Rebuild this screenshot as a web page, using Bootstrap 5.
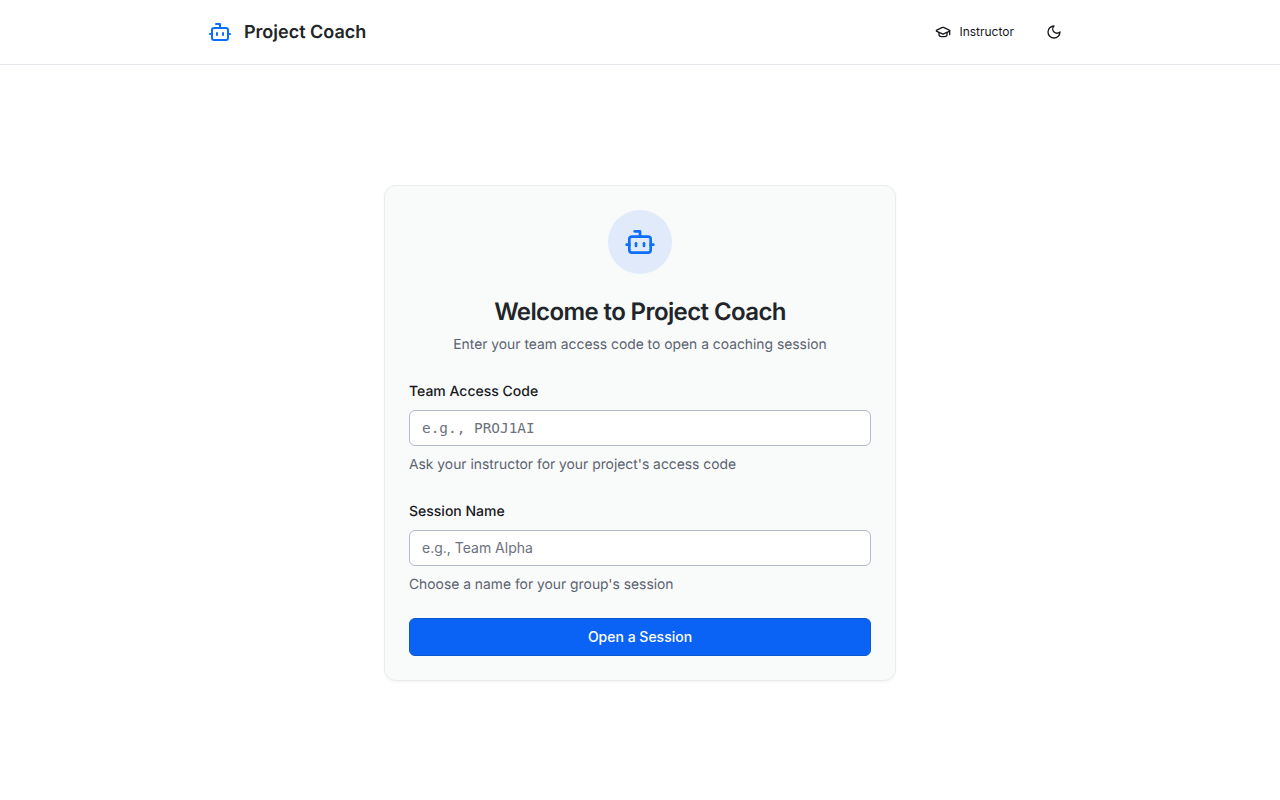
<!DOCTYPE html>
<html lang="en">

<head>
  <meta charset="UTF-8">
  <title>Project Coach</title>
  <link href="https://cdn.jsdelivr.net/npm/bootstrap@5.3.2/dist/css/bootstrap.min.css" rel="stylesheet">
  <style>
    body { font-family: Inter, sans-serif; color: #212529; background: #fff; text-rendering: geometricPrecision; }
    .top-bar { height: 65px; border-bottom: 1px solid #e4e6eb; }
    .top-inner { max-width: 896px; height: 64px; padding: 0 16px; margin: 0 auto; }
    .brand-name { font-size: 18px; font-weight: 600; color: #212529; margin-left: 12px; }
    .instructor-btn { font-size: 12px; font-weight: 400; color: #16181d; padding: 6px 12px; border: 0; background: none; gap: 8px; }
    .moon-btn { width: 36px; height: 36px; border: 0; background: none; color: #16181d; padding: 0; margin-left: 10px; }
    .page-main { height: 735px; }
    .join-card { width: 512px; padding: 24px; background: #f9fafa; border: 1px solid #e9ecef; border-radius: 12px; box-shadow: 0 1px 3px rgba(0,0,0,.05); }
    .icon-circle { width: 64px; height: 64px; border-radius: 50%; background: #e1eafa; margin: 0 auto 20px; }
    .join-title { font-size: 24px; font-weight: 600; letter-spacing: -0.6px; line-height: 36px; margin-bottom: 3px; color: #212529; }
    .join-sub { font-size: 13.85px; line-height: 24px; color: #5c6370; margin-bottom: 24px; }
    .field-label { font-size: 14px; font-weight: 500; line-height: 22px; color: #16181d; margin-bottom: 7px; display: block; }
    .field-input { height: 36px; font-size: 14px; padding: 6px 12px; border: 1px solid #b4b9c9; border-radius: 6px; background: #fff; }
    .field-input::placeholder { color: #6c717c; opacity: 1; }
    .field-mono { font-family: "DejaVu Sans Mono", monospace; font-size: 14.4px; }
    .field-hint { font-size: 13.85px; line-height: 22px; color: #5c6370; margin-top: 8px; }
    .field-group { margin-bottom: 25px; }
    .field-group.last-group { margin-bottom: 22px; }
    .open-btn { height: 38px; font-size: 14px; font-weight: 500; background: #0b63f6; border: 1px solid #0a58ca; border-radius: 6px; }
  </style>
</head>

<body>
  <header class="top-bar">
    <div class="top-inner d-flex align-items-center justify-content-between">
      <a href="#" class="d-flex align-items-center text-decoration-none">
        <svg width="24" height="24" viewBox="0 0 24 24" fill="none" stroke="#0d6efd" stroke-width="2" stroke-linecap="round" stroke-linejoin="round"><path d="M12 8V4H8"/><rect x="4" y="8" width="16" height="12" rx="2"/><path d="M2 14h2"/><path d="M20 14h2"/><path d="M15 13v2"/><path d="M9 13v2"/></svg>
        <span class="brand-name">Project Coach</span>
      </a>
      <div class="d-flex align-items-center">
        <button class="instructor-btn d-flex align-items-center">
          <svg width="16" height="16" viewBox="0 0 24 24" fill="none" stroke="currentColor" stroke-width="2" stroke-linecap="round" stroke-linejoin="round"><path d="M21.42 10.922a1 1 0 0 0-.019-1.838L12.83 5.18a2 2 0 0 0-1.66 0L2.6 9.08a1 1 0 0 0 0 1.832l8.57 3.908a2 2 0 0 0 1.66 0z"/><path d="M22 10v6"/><path d="M6 12.5V16a6 3 0 0 0 12 0v-3.5"/></svg>
          Instructor
        </button>
        <button class="moon-btn d-flex align-items-center justify-content-center">
          <svg width="16" height="16" viewBox="0 0 24 24" fill="none" stroke="currentColor" stroke-width="2" stroke-linecap="round" stroke-linejoin="round"><path d="M12 3a6 6 0 0 0 9 9 9 9 0 1 1-9-9Z"/></svg>
        </button>
      </div>
    </div>
  </header>

  <main class="page-main d-flex align-items-center justify-content-center">
    <div class="join-card">
      <div class="icon-circle d-flex align-items-center justify-content-center">
        <svg width="32" height="32" viewBox="0 0 24 24" fill="none" stroke="#0d6efd" stroke-width="2" stroke-linecap="round" stroke-linejoin="round"><path d="M12 8V4H8"/><rect x="4" y="8" width="16" height="12" rx="2"/><path d="M2 14h2"/><path d="M20 14h2"/><path d="M15 13v2"/><path d="M9 13v2"/></svg>
      </div>
      <h1 class="join-title text-center">Welcome to Project Coach</h1>
      <p class="join-sub text-center">Enter your team access code to open a coaching session</p>
      <div class="field-group">
        <label class="field-label" for="code">Team Access Code</label>
        <input type="text" id="code" class="form-control field-input field-mono" placeholder="e.g., PROJ1AI">
        <div class="field-hint">Ask your instructor for your project's access code</div>
      </div>
      <div class="field-group last-group">
        <label class="field-label" for="session">Session Name</label>
        <input type="text" id="session" class="form-control field-input" placeholder="e.g., Team Alpha">
        <div class="field-hint">Choose a name for your group's session</div>
      </div>
      <button class="btn btn-primary w-100 open-btn">Open a Session</button>
    </div>
  </main>

  <script src="https://cdn.jsdelivr.net/npm/bootstrap@5.3.2/dist/js/bootstrap.bundle.min.js"></script>
</body>

</html>
